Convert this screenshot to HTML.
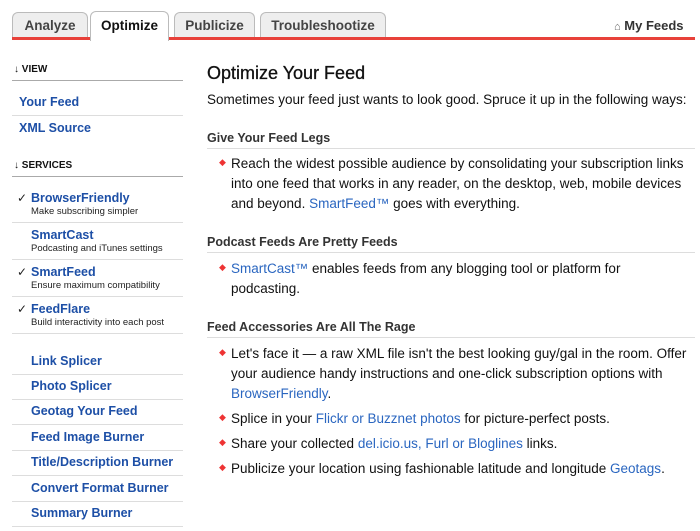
<!DOCTYPE html>
<html><head><meta charset="utf-8"><style>
*{margin:0;padding:0;box-sizing:border-box}
body{width:700px;height:531px;overflow:hidden;background:#fff;font-family:"Liberation Sans",Arial,sans-serif;color:#111;position:relative}
.a{position:absolute;white-space:nowrap}
.tab{position:absolute;top:12px;height:27px;background:#eee;border:1px solid #bbb;border-bottom:none;border-radius:6px 6px 0 0;font-weight:bold;font-size:13.5px;color:#444;text-align:center;line-height:26px}
.red{position:absolute;top:37px;height:3px;background:#e8413a}
.hr{position:absolute;left:12px;width:171px;height:1px;background:#ddd}
.sh{font-size:10px;font-weight:bold;color:#111}
.lk{font-size:12.5px;font-weight:bold;color:#1d4fa6}
.sub{font-size:9.5px;color:#222}
.ck{font-size:12px;color:#222}
.h{font-size:12.5px;font-weight:bold;color:#333}
.hl{position:absolute;left:207px;width:488px;height:1px;background:#ddd}
.t{font-size:13.5px;color:#111;line-height:20px}
.b{color:#e33;font-size:9px}
.l{color:#2a66c0}
</style></head><body>
<div class="tab" style="left:12px;width:76px">Analyze</div>
<div class="tab" style="left:174px;width:81px">Publicize</div>
<div class="tab" style="left:260px;width:126px">Troubleshootize</div>
<div class="red" style="left:12px;width:78px"></div>
<div class="red" style="left:169px;width:526px"></div>
<div class="tab" style="left:90px;width:79px;top:11px;height:30px;background:#fff;color:#111;line-height:28px">Optimize</div>
<div class="a" style="left:614px;top:18px;font-size:13px;font-weight:bold;color:#333"><span style="font-size:11px;color:#666">⌂</span> My Feeds</div>

<div class="a sh" style="left:14px;top:64px">↓ VIEW</div>
<div class="hr" style="top:80px;background:#aaa"></div>
<div class="a lk" style="left:19px;top:95px">Your Feed</div>
<div class="hr" style="top:115px"></div>
<div class="a lk" style="left:19px;top:121px">XML Source</div>
<div class="a sh" style="left:14px;top:160px">↓ SERVICES</div>
<div class="hr" style="top:176px;background:#aaa"></div>

<div class="a ck" style="left:17px;top:191px">✓</div>
<div class="a lk" style="left:31px;top:191px">BrowserFriendly</div>
<div class="a sub" style="left:31px;top:206px">Make subscribing simpler</div>
<div class="hr" style="top:222px"></div>
<div class="a lk" style="left:31px;top:228px">SmartCast</div>
<div class="a sub" style="left:31px;top:243px">Podcasting and iTunes settings</div>
<div class="hr" style="top:259px"></div>
<div class="a ck" style="left:17px;top:265px">✓</div>
<div class="a lk" style="left:31px;top:265px">SmartFeed</div>
<div class="a sub" style="left:31px;top:280px">Ensure maximum compatibility</div>
<div class="hr" style="top:296px"></div>
<div class="a ck" style="left:17px;top:302px">✓</div>
<div class="a lk" style="left:31px;top:302px">FeedFlare</div>
<div class="a sub" style="left:31px;top:317px">Build interactivity into each post</div>
<div class="hr" style="top:333px"></div>

<div class="a lk" style="left:31px;top:354px">Link Splicer</div><div class="hr" style="top:374px"></div>
<div class="a lk" style="left:31px;top:379px">Photo Splicer</div><div class="hr" style="top:399px"></div>
<div class="a lk" style="left:31px;top:404px">Geotag Your Feed</div><div class="hr" style="top:424px"></div>
<div class="a lk" style="left:31px;top:430px">Feed Image Burner</div><div class="hr" style="top:450px"></div>
<div class="a lk" style="left:31px;top:455px">Title/Description Burner</div><div class="hr" style="top:475px"></div>
<div class="a lk" style="left:31px;top:481px">Convert Format Burner</div><div class="hr" style="top:501px"></div>
<div class="a lk" style="left:31px;top:506px">Summary Burner</div><div class="hr" style="top:526px"></div>

<div class="a" style="left:207px;top:63px;font-size:18px;color:#111;-webkit-text-stroke:0.3px #111">Optimize Your Feed</div>
<div class="a t" style="left:207px;top:90px">Sometimes your feed just wants to look good. Spruce it up in the following ways:</div>

<div class="a h" style="left:207px;top:131px">Give Your Feed Legs</div>
<div class="hl" style="top:148px"></div>
<div class="a b" style="left:219px;top:157px">◆</div>
<div class="a t" style="left:231px;top:154px">Reach the widest possible audience by consolidating your subscription links<br>into one feed that works in any reader, on the desktop, web, mobile devices<br>and beyond. <span class="l">SmartFeed™</span> goes with everything.</div>

<div class="a h" style="left:207px;top:235px">Podcast Feeds Are Pretty Feeds</div>
<div class="hl" style="top:252px"></div>
<div class="a b" style="left:219px;top:262px">◆</div>
<div class="a t" style="left:231px;top:259px"><span class="l">SmartCast™</span> enables feeds from any blogging tool or platform for<br>podcasting.</div>

<div class="a h" style="left:207px;top:320px">Feed Accessories Are All The Rage</div>
<div class="hl" style="top:337px"></div>
<div class="a b" style="left:219px;top:347px">◆</div>
<div class="a t" style="left:231px;top:344px">Let's face it — a raw XML file isn't the best looking guy/gal in the room. Offer<br>your audience handy instructions and one-click subscription options with<br><span class="l">BrowserFriendly</span>.</div>
<div class="a b" style="left:219px;top:412px">◆</div>
<div class="a t" style="left:231px;top:409px">Splice in your <span class="l">Flickr or Buzznet photos</span> for picture-perfect posts.</div>
<div class="a b" style="left:219px;top:437px">◆</div>
<div class="a t" style="left:231px;top:434px">Share your collected <span class="l">del.icio.us, Furl or Bloglines</span> links.</div>
<div class="a b" style="left:219px;top:462px">◆</div>
<div class="a t" style="left:231px;top:459px">Publicize your location using fashionable latitude and longitude <span class="l">Geotags</span>.</div>
</body></html>
